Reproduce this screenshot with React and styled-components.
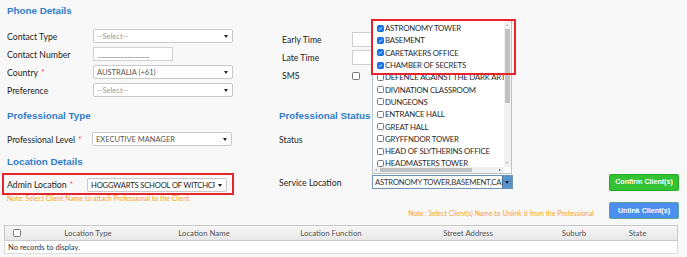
import React from 'react';
import styled, { createGlobalStyle } from 'styled-components';

const GlobalStyle = createGlobalStyle`
  html, body { margin: 0; padding: 0; background: #f8f8f8; }
  body { font-family: Lato, "Open Sans", sans-serif; color: #222; }
  * { box-sizing: border-box; }
`;

const Page = styled.div`
  width: 687px;
  height: 257px;
  overflow: hidden;
  background: #f8f8f8;
`;

const Form = styled.div`
  display: grid;
  grid-template-columns: 272px 1fr;
  padding-left: 7px;
`;

const Title = styled.h3`
  margin: ${p => p.$top || 0}px 0 0;
  height: 14px;
  line-height: 14px;
  font-family: 'Liberation Sans', Arial, sans-serif;
  font-size: 9.8px;
  font-weight: bold;
  color: #2f7dca;
`;

const FieldList = styled.div`
  display: flex;
  flex-direction: column;
  gap: ${p => p.$gap}px;
  margin-top: ${p => p.$top}px;
  padding-left: ${p => p.$left || 0}px;
`;

const Field = styled.div`
  display: flex;
  align-items: center;
  height: ${p => p.$h || 14}px;
  margin-top: ${p => p.$top || 0}px;
`;

const Label = styled.span`
  width: ${p => p.$w}px;
  flex: none;
  font-size: 8.7px;
  color: #1e1e1e;
  white-space: nowrap;
`;

const Req = styled.span`
  color: #e8505b;
  margin-left: 3px;
`;

const SelectBox = styled.div`
  position: relative;
  width: 140px;
  height: 14px;
  display: flex;
  align-items: center;
  padding: 0 ${p => p.$pr || 12}px 0 3px;
  background: #fff;
  border: 1px solid #c9c9c9;
  border-radius: 2px;
  font-size: ${p => p.$size || 7.5}px;
  color: ${p => p.$tone || '#555'};
  white-space: nowrap;
  overflow: hidden;

  &::after {
    content: '';
    position: absolute;
    right: 4px;
    top: 5px;
    border-left: 2.5px solid transparent;
    border-right: 2.5px solid transparent;
    border-top: 3px solid #222;
  }
`;

const SelectText = styled.span`
  overflow: hidden;
  letter-spacing: -0.15px;
`;

const TextInput = styled.div`
  width: ${p => p.$w}px;
  height: ${p => p.$h || 14}px;
  background: #fff;
  border: 1px solid #d0d0d0;
  padding: 1px 4px 0;
  font-size: 8px;
  color: #555;
  line-height: 11px;
  overflow: hidden;
  white-space: nowrap;
`;

const CheckBox = styled.span`
  display: inline-block;
  flex: none;
  width: ${p => p.$size || 8}px;
  height: ${p => p.$size || 8}px;
  border: 1px solid ${p => (p.$on ? '#1a6fdc' : '#777')};
  border-radius: 1.5px;
  background: ${p => (p.$on ? '#1a73e8' : '#fff')};
  position: relative;

  svg {
    position: absolute;
    inset: 0;
    width: 100%;
    height: 100%;
  }
`;

const AdminBox = styled.div`
  display: flex;
  align-items: center;
  margin: 4px 0 0 -5px;
  width: 232px;
  height: 22px;
  padding: 1px 5px 0 3px;
  border: 2px solid #e3262d;
`;

const Note = styled.div`
  font-size: 6.9px;
  color: #f5a52c;
  white-space: nowrap;
  margin-top: ${p => p.$top || 0}px;
`;

const ServiceRow = styled.div`
  display: flex;
  align-items: center;
  justify-content: space-between;
  align-self: center;
  height: 17px;
  padding-right: 8px;
`;

const ServiceGroup = styled.div`
  display: flex;
  align-items: center;
`;

const ServiceWrap = styled.div`
  position: relative;
  width: 141px;
  height: 14px;
`;

const ServiceSelect = styled.div`
  display: flex;
  height: 14px;
  background: #fff;
  border: 1px solid #6f93b8;
`;

const ServiceText = styled.span`
  flex: 1;
  overflow: hidden;
  white-space: nowrap;
  font-size: 7.7px;
  letter-spacing: -0.2px;
  line-height: 12px;
  padding-left: 2px;
  color: #333;
`;

const ServiceButton = styled.span`
  width: 10px;
  flex: none;
  background: #5a92c9;
  border-left: 1px solid #46749f;
  position: relative;

  &::after {
    content: '';
    position: absolute;
    left: 2px;
    top: 5px;
    border-left: 2.5px solid transparent;
    border-right: 2.5px solid transparent;
    border-top: 3px solid #1d2a36;
  }
`;

const ListBox = styled.div`
  position: absolute;
  left: 0;
  bottom: calc(100% + 1px);
  width: 140px;
  height: 154px;
  background: #fff;
  border: 1px solid #b7c3cf;
  display: grid;
  grid-template-columns: 1fr 7px;
  grid-template-rows: 1fr 6px;
  z-index: 5;
`;

const Items = styled.div`
  overflow: hidden;
  padding: 1px 0 0 4px;
`;

const Item = styled.div`
  display: flex;
  align-items: center;
  height: 12.3px;
  font-size: 7.8px;
  letter-spacing: -0.2px;
  color: #2a2a2a;
  white-space: nowrap;
`;

const ItemText = styled.span`
  margin-left: 1px;
`;

const VScroll = styled.div`
  position: relative;
  background: #f1f1f1;
`;

const VThumb = styled.div`
  position: absolute;
  left: 1px;
  right: 1px;
  top: 8px;
  height: 74px;
  background: #c1c1c1;
`;

const HScroll = styled.div`
  position: relative;
  background: #f1f1f1;
`;

const HThumb = styled.div`
  position: absolute;
  top: 1px;
  bottom: 1px;
  left: 7px;
  width: 92px;
  background: #c1c1c1;
`;

const Arrow = styled.span`
  position: absolute;
  width: 0;
  height: 0;
  ${p => p.$dir === 'up' && 'top: 3px; left: 2px; border-left: 1.5px solid transparent; border-right: 1.5px solid transparent; border-bottom: 2px solid #a3a3a3;'}
  ${p => p.$dir === 'down' && 'bottom: 3px; left: 2px; border-left: 1.5px solid transparent; border-right: 1.5px solid transparent; border-top: 2px solid #a3a3a3;'}
  ${p => p.$dir === 'left' && 'left: 2px; top: 1.5px; border-top: 1.5px solid transparent; border-bottom: 1.5px solid transparent; border-right: 2px solid #a3a3a3;'}
  ${p => p.$dir === 'right' && 'right: 3px; top: 1.5px; border-top: 1.5px solid transparent; border-bottom: 1.5px solid transparent; border-left: 2px solid #505050;'}
`;

const Corner = styled.div`
  background: #fff;
`;

const Highlight = styled.div`
  position: absolute;
  left: -2px;
  top: -2px;
  width: 145px;
  height: 56px;
  border: 2px solid #e8232b;
  pointer-events: none;
`;

const Button = styled.button`
  width: 70px;
  height: 17px;
  padding: 0;
  flex: none;
  border-radius: 2px;
  border: 1px solid ${p => (p.$color === 'green' ? '#25a825' : '#5aa393')};
  background: ${p => (p.$color === 'green' ? '#33c233' : '#4c8ff1')};
  color: #fff;
  font-family: 'Liberation Sans', Arial, sans-serif;
  font-size: 7.1px;
  font-weight: bold;
`;

const UnlinkRow = styled.div`
  display: flex;
  justify-content: flex-end;
  align-items: flex-start;
  margin-top: 7px;
  padding-right: 8px;
`;

const UnlinkNote = styled(Note)`
  margin-right: 15px;
`;

const Table = styled.div`
  margin: 6px 0 0 4px;
  width: 674px;
`;

const HeadRow = styled.div`
  display: grid;
  grid-template-columns: 24px 118px 114px 140px 134px 78px 1fr;
  height: 16px;
  align-items: center;
  background: linear-gradient(#f7f7f7, #e7e7e7);
  border: 1px solid #c9c9c9;
  font-size: 7.8px;
  color: #555;
`;

const HeadCell = styled.div`
  white-space: nowrap;
  padding-right: ${p => p.$pr || 0}px;
  display: flex;
  justify-content: center;
`;

const EmptyRow = styled.div`
  height: 13px;
  background: #fff;
  border: 1px solid #dcdcdc;
  border-top: none;
  font-size: 7.6px;
  color: #333;
  line-height: 12px;
  padding-left: 3px;
`;

const Check = () => (
  <svg viewBox="0 0 8 8">
    <path d="M1.6 4.2 L3.3 5.8 L6.5 2.2" fill="none" stroke="#fff" strokeWidth="1.3" />
  </svg>
);

const locations = [
  ['ASTRONOMY TOWER', true],
  ['BASEMENT', true],
  ['CARETAKERS OFFICE', true],
  ['CHAMBER OF SECRETS', true],
  ['DEFENCE AGAINST THE DARK ARTS CLASSROOM', false],
  ['DIVINATION CLASSROOM', false],
  ['DUNGEONS', false],
  ['ENTRANCE HALL', false],
  ['GREAT HALL', false],
  ['GRYFFNDOR TOWER', false],
  ['HEAD OF SLYTHERINS OFFICE', false],
  ['HEADMASTERS TOWER', false]
];

const columns = ['Location Type', 'Location Name', 'Location Function', 'Street Address', 'Suburb'];

export default function App() {
  return (
    <Page>
      <GlobalStyle />
      <Form>
        <Title $top={4}>Phone Details</Title>
        <div />

        <FieldList $top={11} $gap={4}>
          <Field>
            <Label $w={86}>Contact Type</Label>
            <SelectBox $tone="#999">--Select--</SelectBox>
          </Field>
          <Field>
            <Label $w={86}>Contact Number</Label>
            <TextInput $w={80}>______________</TextInput>
          </Field>
          <Field>
            <Label $w={86}>
              Country<Req>*</Req>
            </Label>
            <SelectBox>AUSTRALIA (+61)</SelectBox>
          </Field>
          <Field>
            <Label $w={86}>Preference</Label>
            <SelectBox $tone="#999">--Select--</SelectBox>
          </Field>
        </FieldList>
        <FieldList $top={14} $gap={3} $left={3}>
          <Field $h={15}>
            <Label $w={70}>Early Time</Label>
            <TextInput $w={60} $h={15} />
          </Field>
          <Field $h={15}>
            <Label $w={70}>Late Time</Label>
            <TextInput $w={60} $h={15} />
          </Field>
          <Field $h={15}>
            <Label $w={70}>SMS</Label>
            <CheckBox $size={8} />
          </Field>
        </FieldList>

        <Title $top={12}>Professional Type</Title>
        <Title $top={12}>Professional Status</Title>

        <Field $top={9}>
          <Label $w={85}>
            Professional Level<Req>*</Req>
          </Label>
          <SelectBox>EXECUTIVE MANAGER</SelectBox>
        </Field>
        <Field $top={9}>
          <Label $w={93}>Status</Label>
        </Field>

        <Title $top={9}>Location Details</Title>
        <div />

        <AdminBox>
          <Label $w={80}>
            Admin Location<Req>*</Req>
          </Label>
          <SelectBox $tone="#222" $size={7.6} $pr={11}>
            <SelectText>HOGGWARTS SCHOOL OF WITCHCRAFT</SelectText>
          </SelectBox>
        </AdminBox>
        <ServiceRow>
          <ServiceGroup>
            <Label $w={93}>Service Location</Label>
            <ServiceWrap>
              <ListBox>
                <Items>
                  {locations.map(([name, on]) => (
                    <Item key={name}>
                      <CheckBox $size={7} $on={on}>
                        {on && <Check />}
                      </CheckBox>
                      <ItemText>{name}</ItemText>
                    </Item>
                  ))}
                </Items>
                <VScroll>
                  <Arrow $dir="up" />
                  <VThumb />
                  <Arrow $dir="down" />
                </VScroll>
                <HScroll>
                  <Arrow $dir="left" />
                  <HThumb />
                  <Arrow $dir="right" />
                </HScroll>
                <Corner />
                <Highlight />
              </ListBox>
              <ServiceSelect>
                <ServiceText>ASTRONOMY TOWER,BASEMENT,CARETAKERS OFFICE</ServiceText>
                <ServiceButton />
              </ServiceSelect>
            </ServiceWrap>
          </ServiceGroup>
          <Button $color="green">Confirm Client(s)</Button>
        </ServiceRow>

        <Note $top={-1}>Note: Select Client Name to attach Professional to the Client</Note>
        <UnlinkRow>
          <UnlinkNote $top={7}>Note : Select Client(s) Name to Unlink it from the Professional</UnlinkNote>
          <Button $color="blue">Unlink Client(s)</Button>
        </UnlinkRow>
      </Form>

      <Table>
        <HeadRow>
          <HeadCell>
            <CheckBox $size={8} />
          </HeadCell>
          {columns.map(c => (
            <HeadCell key={c}>{c}</HeadCell>
          ))}
          <HeadCell $pr={15}>State</HeadCell>
        </HeadRow>
        <EmptyRow>No records to display.</EmptyRow>
      </Table>
    </Page>
  );
}
